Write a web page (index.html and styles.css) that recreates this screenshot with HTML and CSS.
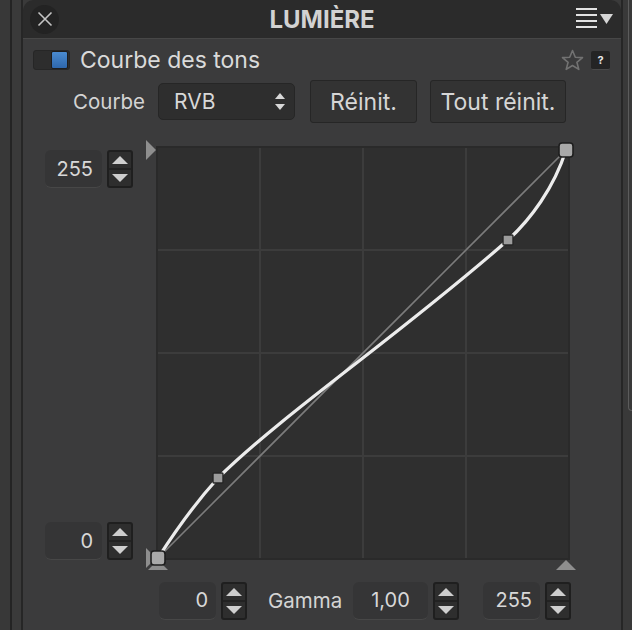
FILE: index.html
```html
<!DOCTYPE html>
<html lang="fr">

<head>
    <meta charset="UTF-8">
    <meta name="viewport" content="width=device-width, initial-scale=1.0">
    <title>Lumière - Courbe des tons</title>

    <link rel="stylesheet" href="styles.css">
</head>

<body>
    <div class="rail"></div>

    <div class="panel">
        <div class="head">
            <span class="close">
                <svg width="16" height="16" viewBox="0 0 16 16">
                    <path d="M1.5 1.5 L14.5 14.5 M14.5 1.5 L1.5 14.5" stroke="#c4c4c4" stroke-width="1.6" fill="none" />
                </svg>
            </span>
            <h1 class="title">LUMIÈRE</h1>
            <span class="menu">
                <svg width="38" height="22" viewBox="0 0 38 22">
                    <rect x="0" y="1" width="21" height="2" fill="#e2e2e2" />
                    <rect x="0" y="7" width="21" height="2" fill="#e2e2e2" />
                    <rect x="0" y="13" width="21" height="2" fill="#e2e2e2" />
                    <rect x="0" y="19" width="21" height="2" fill="#e2e2e2" />
                    <polygon points="24,7 37,7 30.5,17" fill="#d6d6d6" />
                </svg>
            </span>
        </div>

        <div class="module-row">
            <span class="toggle"><span class="toggle-knob"></span></span>
            <span class="module-name">Courbe des tons</span>
            <span class="star">
                <svg width="23" height="22" viewBox="0 0 23 22">
                    <polygon points="11.5,1.5 14.3,8.2 21.5,8.6 15.9,13.3 17.8,20.4 11.5,16.5 5.2,20.4 7.1,13.3 1.5,8.6 8.7,8.2"
                        fill="none" stroke="#727272" stroke-width="1.6" stroke-linejoin="round" />
                </svg>
            </span>
            <span class="help">?</span>
        </div>

        <div class="controls">
            <label class="ctrl-label">Courbe</label>
            <div class="select">
                <span>RVB</span>
                <svg width="10" height="17" viewBox="0 0 10 17">
                    <polygon points="5,0 10,6 0,6" fill="#d8d8d8" />
                    <polygon points="0,11 10,11 5,17" fill="#d8d8d8" />
                </svg>
            </div>
            <button class="btn btn-reset">Réinit.</button>
            <button class="btn btn-reset-all">Tout réinit.</button>
        </div>

        <div class="curve-area">
            <div class="out-col">
                <div class="spin">
                    <span class="field field-out">255</span>
                    <span class="stepper"><span class="step-up"></span><span class="step-down"></span></span>
                </div>
                <div class="spin">
                    <span class="field field-out">0</span>
                    <span class="stepper"><span class="step-up"></span><span class="step-down"></span></span>
                </div>
            </div>

            <svg class="curve" width="440" height="438" viewBox="140 136 440 438">
                <!-- markers for output range -->
                <polygon points="146,140 156,150 146,160" fill="#8e8e8e" />
                <polygon points="146,548 156,558 146,568" fill="#8e8e8e" />

                <rect x="157" y="147" width="412" height="412" fill="#2f2f2f" stroke="#2a2a2a" stroke-width="2" />
                <g stroke="#3c3c3c" stroke-width="2">
                    <line x1="260" y1="148" x2="260" y2="558" />
                    <line x1="363" y1="148" x2="363" y2="558" />
                    <line x1="466" y1="148" x2="466" y2="558" />
                    <line x1="158" y1="250" x2="568" y2="250" />
                    <line x1="158" y1="353" x2="568" y2="353" />
                    <line x1="158" y1="456" x2="568" y2="456" />
                </g>

                <!-- markers for input range -->
                <polygon points="148,570 158,560 168,570" fill="#8e8e8e" />
                <polygon points="556,570 566,560 576,570" fill="#8e8e8e" />

                <line x1="158" y1="558" x2="566" y2="150" stroke="#7c7c7c" stroke-width="1.6" />
                <path d="M158,558 C176,530 198,500 218,478 C285,412 400,335 508,240 C530,220 554,188 566,150"
                    fill="none" stroke="#ececec" stroke-width="3.2" stroke-linecap="round" />

                <rect x="151" y="551" width="14" height="14" rx="3" fill="#a9a9a9" stroke="#1e1e1e" stroke-width="1.6" />
                <rect x="559" y="143" width="14" height="14" rx="3" fill="#a9a9a9" stroke="#1e1e1e" stroke-width="1.6" />
                <rect x="213" y="473" width="10" height="10" rx="1" fill="#9c9c9c" stroke="#262626" stroke-width="1.4" />
                <rect x="503" y="235" width="10" height="10" rx="1" fill="#9c9c9c" stroke="#262626" stroke-width="1.4" />
            </svg>
        </div>

        <div class="in-row">
            <div class="spin">
                <span class="field field-in">0</span>
                <span class="stepper"><span class="step-up"></span><span class="step-down"></span></span>
            </div>
            <span class="gamma-label">Gamma</span>
            <div class="spin">
                <span class="field field-gamma">1,00</span>
                <span class="stepper"><span class="step-up"></span><span class="step-down"></span></span>
            </div>
            <div class="spin spin-last">
                <span class="field field-in">255</span>
                <span class="stepper"><span class="step-up"></span><span class="step-down"></span></span>
            </div>
        </div>
    </div>

    <div class="edge"><span class="scroll-thumb"></span></div>
</body>

</html>
```

FILE: styles.css
```css
body {
    margin: 0;
    padding: 0;
    display: flex;
    height: 630px;
    overflow: hidden;
    background-color: #3a3a3a;
    font-family: Inter, "Liberation Sans", sans-serif;
    color: #d6d6d6;
}

.rail {
    width: 23px;
    flex-shrink: 0;
    background: linear-gradient(to right, #383838 0 10px, #242424 10px 12px, #3a3a3a 12px 21px, #262626 21px 23px);
}

.panel {
    width: 598px;
    flex-shrink: 0;
    background-color: #3b3b3c;
    border-radius: 11px 11px 0 0;
    overflow: hidden;
}

.head {
    height: 38px;
    display: grid;
    grid-template-columns: 1fr auto 1fr;
    align-items: center;
    background-color: #2b2b2b;
    border-bottom: 1px solid #474747;
    padding: 0 7px;
}

.close {
    width: 29px;
    height: 29px;
    border-radius: 50%;
    background-color: #232323;
    display: flex;
    align-items: center;
    justify-content: center;
}

.title {
    margin: 0;
    font-size: 24px;
    font-weight: 700;
    color: #d2d2d2;
}

.menu {
    justify-self: end;
    display: flex;
    margin-top: -2px;
}

.module-row {
    height: 24px;
    margin-top: 9px;
    display: flex;
    align-items: center;
    padding: 0 11px 0 10px;
}

.toggle {
    width: 37px;
    height: 20px;
    box-sizing: border-box;
    border-radius: 3px;
    background-color: #2d2d2d;
    border: 1px solid #262626;
    display: flex;
    justify-content: flex-end;
    align-items: center;
    padding-right: 1px;
}

.toggle-knob {
    width: 15px;
    height: 16px;
    border-radius: 2px;
    background: linear-gradient(#4a8bd0, #2e67ac);
    border: 1px solid #1d1d1d;
}

.module-name {
    margin-left: 10px;
    font-size: 23px;
    color: #dadada;
    flex-grow: 1;
}

.star {
    display: flex;
    margin-right: 7px;
}

.help {
    width: 19px;
    height: 19px;
    box-sizing: border-box;
    border-radius: 2px;
    background-color: #242424;
    border-bottom: 1px solid #4a4a4a;
    color: #e8e8e8;
    font-size: 11px;
    font-weight: 700;
    display: flex;
    align-items: center;
    justify-content: center;
}

.controls {
    height: 43px;
    margin-top: 8px;
    display: flex;
    align-items: center;
    padding-left: 27px;
}

.ctrl-label {
    width: 95px;
    text-align: right;
    font-size: 20.5px;
    color: #d4d4d4;
    margin-right: 13px;
}

.select {
    width: 137px;
    height: 37px;
    box-sizing: border-box;
    border-radius: 5px;
    background-color: #2e2e2e;
    border: 1px solid #262626;
    display: flex;
    align-items: center;
    justify-content: space-between;
    padding: 0 9px 0 15px;
    font-size: 21px;
    color: #d8d8d8;
}

.btn {
    height: 43px;
    box-sizing: border-box;
    border-radius: 3px;
    background-color: #333333;
    border: 1px solid #262626;
    color: #d6d6d6;
    font-family: inherit;
    font-size: 23px;
    padding: 0;
}

.btn-reset {
    width: 107px;
    margin-left: 15px;
}

.btn-reset-all {
    width: 136px;
    margin-left: 13px;
}

.curve-area {
    height: 438px;
    margin-top: 13px;
    display: flex;
    padding-left: 22px;
}

.out-col {
    width: 88px;
    display: flex;
    flex-direction: column;
    justify-content: space-between;
    padding: 14px 0;
    margin-right: 7px;
}

.curve {
    display: block;
}

.spin {
    display: flex;
    align-items: center;
}

.field {
    height: 38px;
    box-sizing: border-box;
    border-radius: 6px;
    background-color: #353536;
    border-bottom: 1px solid #474747;
    display: flex;
    align-items: center;
    justify-content: flex-end;
    font-size: 20px;
    color: #d8d8d8;
}

.field-out {
    width: 57px;
    padding-right: 9px;
}

.field-in {
    width: 57px;
    padding-right: 8px;
}

.field-gamma {
    width: 75px;
    justify-content: center;
}

.stepper {
    width: 26px;
    height: 38px;
    box-sizing: border-box;
    margin-left: 5px;
    border: 2px solid #1f1f1f;
    border-radius: 3px;
    background-color: #2e2e2e;
    display: flex;
    flex-direction: column;
}

.step-up,
.step-down {
    flex: 1;
    display: flex;
    align-items: center;
    justify-content: center;
}

.step-up {
    border-bottom: 2px solid #222;
}

.step-up::after {
    content: "";
    border-left: 8px solid transparent;
    border-right: 8px solid transparent;
    border-bottom: 8px solid #cfcfcf;
}

.step-down::after {
    content: "";
    border-left: 8px solid transparent;
    border-right: 8px solid transparent;
    border-top: 8px solid #cfcfcf;
}

.in-row {
    height: 39px;
    margin-top: 7px;
    display: flex;
    align-items: center;
    padding-left: 136px;
}

.gamma-label {
    width: 85px;
    margin-left: 21px;
    font-size: 20.5px;
    color: #d4d4d4;
}

.spin-last {
    margin-left: 24px;
}

.edge {
    flex-grow: 1;
    background: linear-gradient(to right, #262626 0 2px, #393939 2px);
    display: flex;
    justify-content: flex-end;
}

.scroll-thumb {
    width: 3px;
    height: 410px;
    border-left: 1px solid #5c5c5c;
    border-bottom: 1px solid #5c5c5c;
    border-radius: 0 0 0 4px;
}
```
